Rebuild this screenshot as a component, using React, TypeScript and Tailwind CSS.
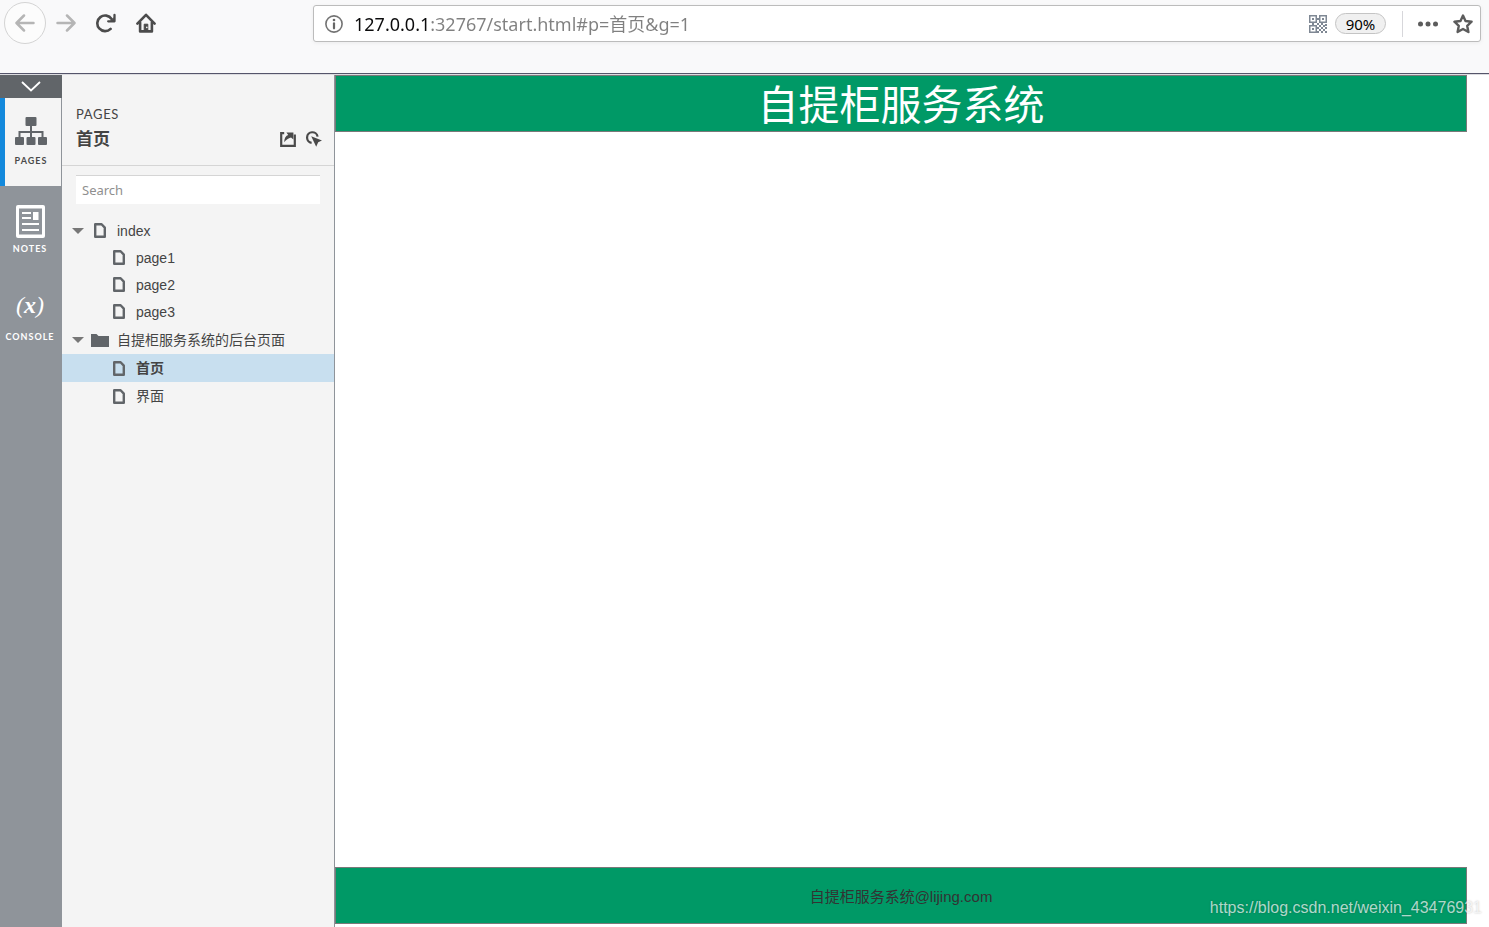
import type { ReactNode } from "react";

type PageLink = { name: string; href: string; active?: boolean };

const INDEX_PAGES: PageLink[] = [
  { name: "page1", href: "#p=page1" },
  { name: "page2", href: "#p=page2" },
  { name: "page3", href: "#p=page3" },
];

const ADMIN_PAGES: PageLink[] = [
  { name: "首页", href: "#p=首页", active: true },
  { name: "界面", href: "#p=界面" },
];

function BackIcon() {
  return (
    <svg width="20" height="18" viewBox="0 0 20 18" fill="none" stroke="currentColor" strokeWidth="2.5" strokeLinecap="round" strokeLinejoin="round">
      <path d="M18.5 9H2M9 1.5L1.5 9L9 16.5" />
    </svg>
  );
}

function ForwardIcon() {
  return (
    <svg width="20" height="18" viewBox="0 0 20 18" fill="none" stroke="currentColor" strokeWidth="2.5" strokeLinecap="round" strokeLinejoin="round">
      <path d="M1.5 9H18M11 1.5L18.5 9L11 16.5" />
    </svg>
  );
}

function ReloadIcon() {
  return (
    <svg width="20" height="20" viewBox="0 0 20 20" fill="none" stroke="currentColor" strokeWidth="2.6" strokeLinecap="round" strokeLinejoin="round">
      <path d="M14.6 15.9A7.8 7.8 0 1 1 15.6 6" />
      <path d="M18.5 2V8.3H12.2" strokeWidth="2.3" />
      <path d="M18.5 4.5V8.3H14.7Z" fill="currentColor" strokeWidth="1" />
    </svg>
  );
}

function HomeIcon() {
  return (
    <svg width="20" height="20" viewBox="0 0 20 20" fill="none" stroke="currentColor" strokeLinecap="round" strokeLinejoin="round">
      <path d="M1.4 10.6L10 1.8L18.6 10.6" strokeWidth="2.6" />
      <path d="M4.1 9.5V18.4H15.9V9.5" strokeWidth="2.6" />
      <path d="M8.2 18V11.2H11.8V18Z" fill="currentColor" strokeWidth="1" />
      <circle cx="10.8" cy="14.4" r="0.8" fill="#f9f9fa" stroke="none" />
    </svg>
  );
}

function InfoIcon() {
  return (
    <svg className="shrink-0" width="18" height="18" viewBox="0 0 18 18" fill="none">
      <circle cx="9" cy="9" r="8.1" stroke="#737373" strokeWidth="1.6" />
      <circle cx="9" cy="5" r="1.3" fill="#666666" />
      <path d="M9 8.4V13.3" stroke="#666666" strokeWidth="2.2" strokeLinecap="round" />
    </svg>
  );
}

function QrIcon() {
  return (
    <svg width="18" height="18" viewBox="0 0 18 18" fill="#7f8894">
      <path fillRule="evenodd" d="M0 0H8V8H0ZM1.5 1.5V6.5H6.5V1.5ZM10 0H18V8H10ZM11.5 1.5V6.5H16.5V1.5ZM0 10H8V18H0ZM1.5 11.5V16.5H6.5V11.5Z" />
      <path d="M3 3H5V5H3ZM13 3H15V5H13ZM3 13H5V15H3ZM8 3H10V5H8ZM3 8H5V10H3ZM8 8H10V10H8ZM12 8H14V10H12ZM16 9H18V11H16ZM10 10H12V12H10ZM14 10H16V12H14ZM8 12H10V14H8ZM12 12H14V14H12ZM16 12H18V14H16ZM10 14H12V16H10ZM14 14H16V16H14ZM12 16H14V18H12ZM16 16H18V18H16ZM8 16H10V18H8Z" />
    </svg>
  );
}

function StarIcon() {
  return (
    <svg width="20" height="20" viewBox="0 0 20 20" fill="none" stroke="currentColor" strokeWidth="2.4" strokeLinejoin="round">
      <path d="M10 1.6L12.5 7L18.6 7.7L14.2 11.8L15.4 18L10 15L4.6 18L5.8 11.8L1.4 7.7L7.5 7Z" />
    </svg>
  );
}

function SitemapIcon() {
  return (
    <svg width="32" height="28" viewBox="0 0 32 28" fill="#616569">
      <rect x="10.5" y="0" width="11" height="9" rx="1" />
      <path d="M15 9H17V14H28.5V20H26.5V16H17V20H15V16H5.5V20H3.5V14H15Z" />
      <rect x="0" y="20" width="9" height="8" rx="1" />
      <rect x="11.5" y="20" width="9" height="8" rx="1" />
      <rect x="23" y="20" width="9" height="8" rx="1" />
    </svg>
  );
}

function NotesIcon() {
  return (
    <svg width="29" height="33" viewBox="0 0 29 33" fill="none">
      <rect width="29" height="33" rx="2" fill="#ffffff" />
      <rect x="3" y="3.5" width="23" height="26" fill="#8f949a" />
      <path d="M6 8H15M6 13H15M6 19H23M6 25H23" stroke="#ffffff" strokeWidth="2.2" />
      <rect x="17" y="7" width="5.5" height="8" fill="#ffffff" />
    </svg>
  );
}

function ShareIcon() {
  return (
    <svg width="16" height="15" viewBox="0 0 16 15" fill="none">
      <path d="M4.2 1.2H1.2V13.8H14.8V2.5" stroke="#4a4a4a" strokeWidth="2.2" />
      <path d="M4.2 10.2C4.2 6 6 3.6 8.2 3L6.4 0.6H13.4V7.4L11 5.4C8.2 6.2 6.2 7.4 4.2 10.2Z" fill="#4a4a4a" />
    </svg>
  );
}

function ClickIcon() {
  return (
    <svg width="16" height="16" viewBox="0 0 16 16" fill="none">
      <path d="M5.6 11.8A5.3 5.3 0 1 1 11.6 5.6" stroke="#4a4a4a" strokeWidth="2.2" />
      <path d="M5.2 5.2L16 9.4L12.2 11.2L10.2 15.8Z" fill="#4a4a4a" />
    </svg>
  );
}

function PageIcon() {
  return (
    <svg className="shrink-0" width="12" height="15" viewBox="0 0 12 15" fill="none">
      <path d="M1.2 1.2H7.6L10.8 4.6V13.8H1.2Z" stroke="#616569" strokeWidth="2.4" strokeLinejoin="round" />
    </svg>
  );
}

function FolderIcon() {
  return (
    <svg className="shrink-0" width="18" height="13" viewBox="0 0 18 13" fill="#616569">
      <path d="M0 0H5.5L7.5 2H18V13H0Z" />
    </svg>
  );
}

function Caret() {
  return (
    <svg width="12" height="6" viewBox="0 0 12 6" fill="#777777">
      <path d="M0 0H12L6 6Z" />
    </svg>
  );
}

function RailTab({ label, active, children }: { label: string; active?: boolean; children: ReactNode }) {
  return (
    <button
      type="button"
      className={`flex h-[88px] w-full flex-col items-center pt-[19px] ${
        active ? "border-r border-l-5 border-r-[#8f949a] border-l-[#1389dc] bg-[#f4f4f4] pr-1 text-[#4a4a4a]" : "pr-0.5 text-white"
      }`}
    >
      <span className="flex h-[33px] items-start">{children}</span>
      <span className="mt-[5px] font-[Lato] text-[9px] leading-3 font-bold tracking-[1px]">{label}</span>
    </button>
  );
}

function PageRow({ page, className }: { page: PageLink; className: string }) {
  return (
    <li>
      <a
        href={page.href}
        className={`flex items-center gap-[11px] pl-[51px] ${className} ${page.active ? "bg-[#c8dfef] font-bold" : ""}`}
      >
        <PageIcon />
        {page.name}
      </a>
    </li>
  );
}

export default function App() {
  return (
    <div className="flex min-h-screen flex-col bg-white font-['Liberation_Sans','Noto_Sans_CJK_SC',sans-serif] text-[#444444]">
      <header className="flex h-[75px] items-start border-b border-[#dcdce0] bg-[#f9f9fa] shadow-[inset_0_-1px_0_#55556a]">
        <nav className="flex h-[46px] w-[313px] shrink-0 items-center pl-1 text-[#4c4c4c]">
          <button
            type="button"
            aria-label="Back"
            className="flex size-[42px] items-center justify-center rounded-full border border-[#d4d4d4] bg-[#fcfcfc] text-[#b5b5b5]"
          >
            <BackIcon />
          </button>
          <button type="button" aria-label="Forward" className="flex w-10 justify-center text-[#b5b5b5]">
            <ForwardIcon />
          </button>
          <button type="button" aria-label="Reload" className="flex w-10 justify-center">
            <ReloadIcon />
          </button>
          <button type="button" aria-label="Home" className="flex w-10 justify-center">
            <HomeIcon />
          </button>
        </nav>

        <div className="mt-[5px] mr-2 flex h-[37px] flex-1 items-center rounded-[3px] border border-[#bcbcbc] bg-white pr-[7px] pl-[11px] shadow-[0_1px_4px_rgba(0,0,0,0.06)]">
          <InfoIcon />
          {/* host is darker than the rest of the address */}
          <input
            type="text"
            aria-label="Address"
            defaultValue="127.0.0.1:32767/start.html#p=首页&g=1"
            className="ml-[11px] h-8 min-w-0 flex-1 bg-[linear-gradient(to_right,#0c0c0d_77px,#808080_77px)] bg-clip-text pb-0.5 font-['Noto_Sans','Noto_Sans_CJK_SC',sans-serif] text-[18px] text-transparent caret-black outline-none"
          />
          <button type="button" aria-label="QR code">
            <QrIcon />
          </button>
          <button
            type="button"
            className="ml-2 h-[21px] w-[51px] rounded-full border border-[#c4c4c4] bg-[#f0f0f0] font-['Noto_Sans',sans-serif] text-[15px] leading-[18px] text-black"
          >
            90%
          </button>
          <span className="mr-[15px] ml-4 h-[26px] w-px bg-[#d7d7db]" />
          <button type="button" aria-label="Page actions" className="text-[#5c5c5c]">
            <svg width="20" height="6" viewBox="0 0 20 6" fill="currentColor">
              <circle cx="2.5" cy="3" r="2.5" />
              <circle cx="10" cy="3" r="2.5" />
              <circle cx="17.5" cy="3" r="2.5" />
            </svg>
          </button>
          <button type="button" aria-label="Bookmark" className="ml-[15px] text-[#5c5c5c]">
            <StarIcon />
          </button>
        </div>
      </header>

      <div className="flex flex-1">
        <div className="w-[62px] shrink-0 bg-[#8f949a]">
          <button type="button" aria-label="Collapse" className="flex h-[23px] w-full items-center justify-center bg-[#616569]">
            <svg width="20" height="11" viewBox="0 0 20 11" fill="none" stroke="#ffffff" strokeWidth="1.8">
              <path d="M1 1L10 9.5L19 1" />
            </svg>
          </button>
          <RailTab label="PAGES" active>
            <SitemapIcon />
          </RailTab>
          <RailTab label="NOTES">
            <NotesIcon />
          </RailTab>
          <RailTab label="CONSOLE">
            <span className="font-['Liberation_Serif',serif] text-2xl leading-[25px] italic">
              (<b>x</b>)
            </span>
          </RailTab>
        </div>

        <aside className="w-[273px] shrink-0 border-r border-[#8f949a] bg-[#f4f4f4]">
          <div className="border-b border-[#d5d5d5] px-[14px] pt-[30px] pb-[10px]">
            <p className="font-[Lato] text-[13px] leading-[18px] tracking-wider">PAGES</p>
            <div className="flex h-8 items-center justify-between">
              <h2 className="pt-0.5 text-[17px] leading-6 font-bold">首页</h2>
              <div className="-mr-[2px] flex gap-[10px]">
                <button type="button" aria-label="Share">
                  <ShareIcon />
                </button>
                <button type="button" aria-label="Show hotspots">
                  <ClickIcon />
                </button>
              </div>
            </div>
          </div>

          <div className="px-[14px] pt-[9px]">
            <input
              type="search"
              aria-label="Search"
              placeholder="Search"
              className="block h-[29px] w-full border-t border-[#d5d5d5] bg-white px-[6px] font-['Noto_Sans',sans-serif] text-[13px] outline-none placeholder:text-[#8f8f8f]"
            />
          </div>

          <ul className="mt-[13px] text-sm">
            <li className="pb-px">
              <a href="#p=index" className="flex h-[27px] items-center pl-[10px]">
                <Caret />
                <span className="flex w-[33px] justify-center pr-[5px] pl-1">
                  <PageIcon />
                </span>
                index
              </a>
              <ul>
                {INDEX_PAGES.map((page) => (
                  <PageRow key={page.name} page={page} className="h-[27px]" />
                ))}
              </ul>
            </li>
            <li>
              <button type="button" className="flex h-7 w-full items-center pl-[10px]">
                <Caret />
                <span className="flex w-[33px] justify-center pr-[5px] pl-1">
                  <FolderIcon />
                </span>
                自提柜服务系统的后台页面
              </button>
              <ul>
                {ADMIN_PAGES.map((page) => (
                  <PageRow key={page.name} page={page} className="h-7" />
                ))}
              </ul>
            </li>
          </ul>
        </aside>

        <main className="flex min-w-0 flex-1 flex-col justify-between pr-[22px] pb-[3px]">
          <h1 className="flex h-[57px] items-center justify-center border border-[#797979] bg-[#009966] pt-[6px] text-[41px] text-white">
            自提柜服务系统
          </h1>
          <footer className="relative flex h-[57px] items-center justify-center border border-[#797979] bg-[#009966] pt-1 text-[15px] text-[#333333]">
            自提柜服务系统@lijing.com
            <a
              href="https://blog.csdn.net/weixin_43476931"
              className="absolute -right-4 bottom-[3px] text-base leading-6 text-white/70 [text-shadow:0_0_2px_rgba(0,0,0,0.25)]"
            >
              https://blog.csdn.net/weixin_43476931
            </a>
          </footer>
        </main>
      </div>
    </div>
  );
}
